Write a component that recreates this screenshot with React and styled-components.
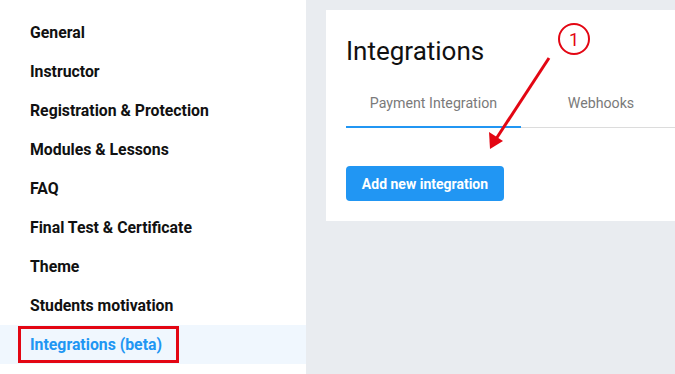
import styled, { createGlobalStyle } from "styled-components";

const GlobalStyle = createGlobalStyle`
  html, body {
    margin: 0;
    padding: 0;
    background: #e9ecf0;
    font-family: Roboto, "Liberation Sans", Arial, sans-serif;
  }
`;

const Page = styled.div`
  display: flex;
  width: 675px;
  height: 374px;
  overflow: hidden;
  position: relative;
`;

const Sidebar = styled.nav`
  width: 306px;
  flex-shrink: 0;
  background: #fff;
  padding-top: 13px;
  display: flex;
  flex-direction: column;
`;

const NavItem = styled.div`
  height: 39px;
  display: flex;
  align-items: center;
  padding-left: 30px;
  font-size: 15.8px;
  font-weight: 700;
  color: ${(p) => (p.active ? "#2196f3" : "#111")};
  background: ${(p) => (p.active ? "#f0f7fe" : "transparent")};
`;

const Highlight = styled.span`
  display: inline-flex;
  align-items: center;
  box-sizing: border-box;
  height: 37px;
  margin-left: -12px;
  padding: 0 14px 0 9px;
  border: 3px solid #e30613;
`;

const Main = styled.main`
  flex: 1;
  padding: 10px 0 0 20px;
`;

const Card = styled.section`
  position: relative;
  background: #fff;
  height: 211px;
  box-sizing: border-box;
  padding: 26px 0 0 20px;
`;

const Title = styled.h1`
  margin: 0;
  font-size: 26px;
  font-weight: 400;
  color: #111;
  line-height: 30px;
`;

const Tabs = styled.div`
  display: flex;
  margin-top: 22px;
  border-bottom: 1px solid #dcdcdc;
`;

const Tab = styled.div`
  width: ${(p) => p.width}px;
  height: 40px;
  box-sizing: border-box;
  display: flex;
  align-items: center;
  justify-content: center;
  padding-bottom: 8px;
  font-size: 14.2px;
  color: #7a7a7a;
  border-bottom: 2px solid ${(p) => (p.active ? "#2196f3" : "transparent")};
  margin-bottom: -1px;
`;

const Button = styled.button`
  margin-top: 38px;
  width: 158px;
  height: 35px;
  border: none;
  border-radius: 4px;
  background: #2196f3;
  color: #fff;
  font-family: inherit;
  font-size: 14px;
  font-weight: 700;
  cursor: pointer;
`;

const Annotation = styled.svg`
  position: absolute;
  left: 0;
  top: 0;
  pointer-events: none;
`;

const Marker = styled.text`
  font-family: Roboto, "Liberation Sans", Arial, sans-serif;
  font-size: 18px;
  fill: #e30613;
`;

const items = [
  "General",
  "Instructor",
  "Registration & Protection",
  "Modules & Lessons",
  "FAQ",
  "Final Test & Certificate",
  "Theme",
  "Students motivation",
];

export default function App() {
  return (
    <>
      <GlobalStyle />
      <Page>
        <Sidebar>
          {items.map((item) => (
            <NavItem key={item}>{item}</NavItem>
          ))}
          <NavItem active>
            <Highlight>Integrations (beta)</Highlight>
          </NavItem>
        </Sidebar>
        <Main>
          <Card>
            <Title>Integrations</Title>
            <Tabs>
              <Tab active width={175}>Payment Integration</Tab>
              <Tab width={160}>Webhooks</Tab>
            </Tabs>
            <Button>Add new integration</Button>
          </Card>
        </Main>
        <Annotation width="675" height="374" viewBox="0 0 675 374">
          <circle cx="574" cy="39" r="15" fill="none" stroke="#e30613" strokeWidth="2" />
          <Marker x="574" y="46" textAnchor="middle">1</Marker>
          <line x1="549" y1="58" x2="496" y2="139" stroke="#e30613" strokeWidth="3" />
          <polygon points="490,149 489,132 503,141" fill="#e30613" />
        </Annotation>
      </Page>
    </>
  );
}
